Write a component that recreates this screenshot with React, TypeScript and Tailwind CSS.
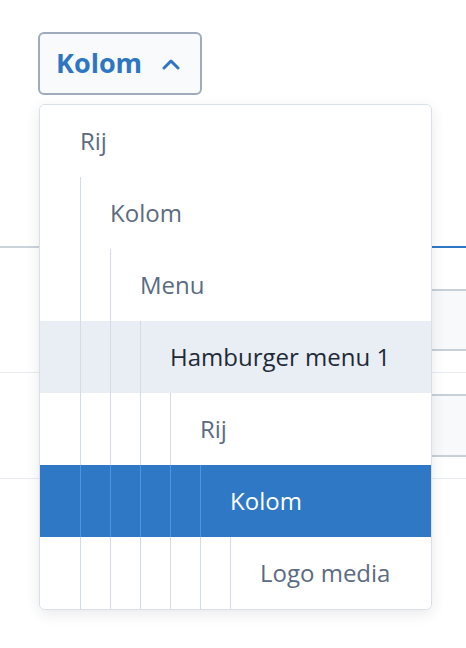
import React from 'react';

interface TreeItem {
  label: string;
  depth: number;
  state?: 'hover' | 'selected';
}

const items: TreeItem[] = [
  { label: 'Rij', depth: 0 },
  { label: 'Kolom', depth: 1 },
  { label: 'Menu', depth: 2 },
  { label: 'Hamburger menu 1', depth: 3, state: 'hover' },
  { label: 'Rij', depth: 4 },
  { label: 'Kolom', depth: 5, state: 'selected' },
  { label: 'Logo media', depth: 6 },
];

const TreeRow: React.FC<{ item: TreeItem }> = ({ item }) => {
  const selected = item.state === 'selected';
  const hover = item.state === 'hover';

  const rowBg = selected ? 'bg-[#2f78c5]' : hover ? 'bg-[#e9eef5]' : 'bg-white';
  const textColor = selected ? 'text-white' : hover ? 'text-[#1f2a37]' : 'text-[#5b6b83]';
  const guide = selected ? 'border-[#4b96e2]' : 'border-[#d3dbe6]';

  return (
    <div className={`flex h-[72px] pl-10 ${rowBg}`}>
      {Array.from({ length: item.depth }).map((_, i) => (
        <div key={i} className={`w-[30px] shrink-0 border-l ${guide}`} />
      ))}
      <span className={`flex items-center text-[24px] ${textColor}`}>{item.label}</span>
    </div>
  );
};

export default function App() {
  return (
    <div className="relative h-[648px] w-full overflow-hidden bg-white font-['Open_Sans',sans-serif]">
      <div className="h-[246px] pl-[38px] pt-8">
        <div className="relative inline-block">
          <button className="flex h-[63px] w-[164px] items-center gap-[20px] rounded-md border-2 border-[#9dabbd] bg-[#f8fafc] pl-4 text-[27px] font-bold text-[#2e76c4]">
            <span>Kolom</span>
            <svg width="18" height="12" viewBox="0 0 18 12" fill="none">
              <polyline
                points="2,10 9,3 16,10"
                stroke="#2e76c4"
                strokeWidth="3"
                strokeLinecap="round"
                strokeLinejoin="round"
              />
            </svg>
          </button>

          <div className="absolute left-px top-[72px] z-10 w-[393px] overflow-hidden rounded-md border border-[#d9dfe8] bg-white shadow-[0_4px_14px_rgba(30,41,59,0.10)]">
            {items.map((item, i) => (
              <TreeRow key={i} item={item} />
            ))}
          </div>
        </div>
      </div>

      <div className="flex">
        <div className="h-0.5 flex-1 bg-[#cad2dc]" />
        <div className="h-0.5 w-[220px] bg-[#2f78c5]" />
      </div>

      <div className="h-[125px] border-b border-[#e8ecf1] pl-[60px] pt-[41px]">
        <div className="-mr-4 h-[62px] rounded border-2 border-[#c7cfd9] bg-[#f8f9fb]" />
      </div>

      <div className="h-[106px] border-b border-[#e8ecf1] pl-[60px] pt-[21px]">
        <div className="-mr-4 h-[63px] rounded border-2 border-[#c7cfd9] bg-[#f8f9fb]" />
      </div>
    </div>
  );
}
